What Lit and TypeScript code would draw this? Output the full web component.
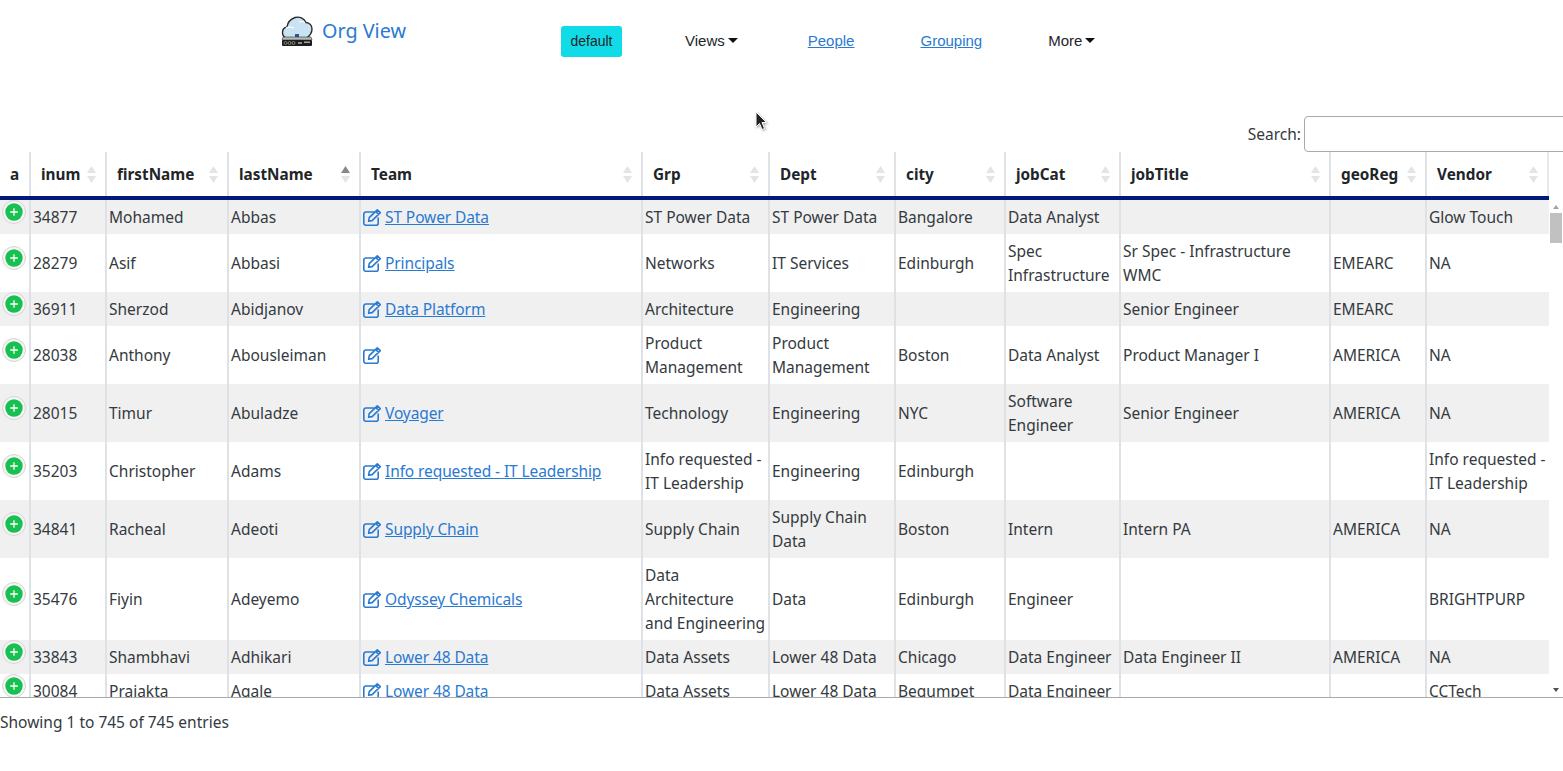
import { LitElement, html, css, svg } from 'lit';
import { customElement } from 'lit/decorators.js';

const widths = [29, 76, 122, 132, 282, 127, 126, 110, 115, 210, 96, 124];
const headers = ['a', 'inum', 'firstName', 'lastName', 'Team', 'Grp', 'Dept', 'city', 'jobCat', 'jobTitle', 'geoReg', 'Vendor'];

const rows = [
    ['34877', 'Mohamed', 'Abbas', 'ST Power Data', 'ST Power Data', 'ST Power Data', 'Bangalore', 'Data Analyst', '', '', 'Glow Touch'],
    ['28279', 'Asif', 'Abbasi', 'Principals', 'Networks', 'IT Services', 'Edinburgh', 'Spec Infrastructure', 'Sr Spec - Infrastructure WMC', 'EMEARC', 'NA'],
    ['36911', 'Sherzod', 'Abidjanov', 'Data Platform', 'Architecture', 'Engineering', '', '', 'Senior Engineer', 'EMEARC', ''],
    ['28038', 'Anthony', 'Abousleiman', '', 'Product Management', 'Product Management', 'Boston', 'Data Analyst', 'Product Manager I', 'AMERICA', 'NA'],
    ['28015', 'Timur', 'Abuladze', 'Voyager', 'Technology', 'Engineering', 'NYC', 'Software Engineer', 'Senior Engineer', 'AMERICA', 'NA'],
    ['35203', 'Christopher', 'Adams', 'Info requested - IT Leadership', 'Info requested -\nIT Leadership', 'Engineering', 'Edinburgh', '', '', '', 'Info requested -\nIT Leadership'],
    ['34841', 'Racheal', 'Adeoti', 'Supply Chain', 'Supply Chain', 'Supply Chain Data', 'Boston', 'Intern', 'Intern PA', 'AMERICA', 'NA'],
    ['35476', 'Fiyin', 'Adeyemo', 'Odyssey Chemicals', 'Data\nArchitecture\nand Engineering', 'Data', 'Edinburgh', 'Engineer', '', '', 'BRIGHTPURP'],
    ['33843', 'Shambhavi', 'Adhikari', 'Lower 48 Data', 'Data Assets', 'Lower 48 Data', 'Chicago', 'Data Engineer', 'Data Engineer II', 'AMERICA', 'NA'],
    ['30084', 'Prajakta', 'Agale', 'Lower 48 Data', 'Data Assets', 'Lower 48 Data', 'Begumpet', 'Data Engineer', '', '', 'CCTech'],
];

const editIcon = svg`<path fill="none" stroke="currentColor" stroke-width="1.6" stroke-linejoin="round" d="M11.500 3H2.800A2 2 0 0 0 .8 5v9.200a2 2 0 0 0 2 2h10.400a2 2 0 0 0 2-2V8.500"/><path fill="none" stroke="currentColor" stroke-width="1.6" stroke-linejoin="round" d="M6.200 8.600 14.300 .9l3 2.800-8.200 7.900-3.500.7zM12.600 2.500l3 2.900"/>`;

@customElement('app-root')
export class AppRoot extends LitElement {
    static styles = css`
        :host {
            display: block;
            position: relative;
            height: 771px;
            overflow: hidden;
            background: #fff;
            color: #212529;
            font-family: 'Noto Sans', sans-serif;
            font-size: 15.5px;
            line-height: 24px;
        }

        .topbar {
            display: flex;
            height: 116px;
            font-family: 'Liberation Sans', sans-serif;
            font-size: 15px;
        }

        .brand {
            display: flex;
            align-items: flex-start;
            gap: 9px;
            margin-left: 281px;
            padding-top: 15px;
            width: 280px;
            color: #2a7ad2;
            font-family: 'Noto Sans', sans-serif;
            font-size: 19.800px;
            line-height: 32px;
            box-sizing: border-box;
        }

        .brand svg {
            display: block;
        }

        .nav {
            display: flex;
            align-items: flex-start;
            padding-top: 26px;
            line-height: 30px;
        }

        .badge {
            width: 61px;
            height: 31px;
            border-radius: 3px;
            background: #11dbe6;
            font-size: 14px;
            line-height: 30px;
            text-align: center;
            margin-right: 63px;
        }

        .menu {
            color: #212529;
            margin-right: 70px;
        }

        .menu::after {
            content: '';
            display: inline-block;
            margin-left: 3px;
            vertical-align: 3px;
            border-top: 5px solid #111;
            border-left: 5px solid transparent;
            border-right: 5px solid transparent;
        }

        .navlink {
            color: #2a7ad2;
            text-decoration: underline;
            margin-right: 66px;
        }

        .searchbar {
            display: flex;
            justify-content: flex-end;
            align-items: flex-start;
            height: 36px;
            gap: 3px;
            line-height: 36px;
            color: #343a40;
        }

        .search-box {
            width: 270px;
            height: 36px;
            flex: none;
            margin-right: -11px;
            border: 1px solid #aaa;
            border-radius: 4px;
            box-sizing: border-box;
        }

        table {
            table-layout: fixed;
            border-collapse: separate;
            border-spacing: 0;
            width: 1549px;
        }

        th {
            position: relative;
            height: 44px;
            padding: 0 0 0 10px;
            box-sizing: border-box;
            border-left: 2px solid #dee2e6;
            font-weight: 700;
            font-size: 15.300px;
            text-align: left;
            white-space: nowrap;
        }

        th:first-child {
            border-left: none;
            padding-left: 10px;
        }

        th:last-child {
            border-right: 2px solid #e6e9ec;
        }

        .head {
            border-bottom: 4px solid #001a7a;
            width: 1549px;
        }

        .sort {
            position: absolute;
            right: 9px;
            top: 14px;
            width: 9px;
            height: 17px;
        }

        .body-wrap {
            display: flex;
            height: 497px;
            border-bottom: 1px solid #aaa;
        }

        .body-clip {
            width: 1549px;
            overflow: hidden;
            flex: none;
        }

        td {
            padding: 5px 0 5px 2px;
            border-left: 2px solid #dee2e6;
            box-sizing: border-box;
            vertical-align: middle;
            color: #343a40;
            white-space: pre-line;
        }

        td:first-child {
            border-left: none;
            padding: 0;
        }

        tr.odd td {
            background: #f0f0f0;
        }

        .plus {
            display: block;
            width: 24px;
            height: 24px;
            margin: -11px 0 0 2px;
        }

        .team {
            color: #2a7ad2;
        }

        .team a {
            color: inherit;
            text-decoration: underline;
            letter-spacing: -0.1px;
        }

        .team svg {
            width: 18px;
            height: 17px;
            vertical-align: -3px;
            margin-right: 4px;
        }

        .scrollbar {
            flex: 1;
            display: flex;
            flex-direction: column;
            align-items: center;
        }

        .arrow-up,
        .arrow-down {
            flex: none;
            width: 0;
            height: 0;
            border-left: 3.500px solid transparent;
            border-right: 3.500px solid transparent;
        }

        .arrow-up {
            margin-top: 5px;
            border-bottom: 4px solid #a3a3a3;
        }

        .arrow-down {
            margin-top: auto;
            margin-bottom: 5px;
            border-top: 4px solid #505050;
        }

        .thumb {
            flex: none;
            width: 12px;
            height: 30px;
            margin-top: 4px;
            background: #c1c1c1;
        }

        .info {
            padding-top: 12px;
            color: #343a40;
        }

        .cursor {
            position: absolute;
            left: 755px;
            top: 111px;
            width: 13px;
            height: 21px;
            filter: drop-shadow(1px 1px 1px rgba(0, 0, 0, 0.35));
        }
    `;

    _sort(col: string) {
        const active = col === 'lastName';
        return html`<svg class="sort" viewBox="0 0 9 17">
            <path d="M4.500 0 9 7H0z" fill=${active ? '#888' : '#e2e4e6'} />
            <path d="M4.500 17 9 10H0z" fill="#e2e4e6" />
        </svg>`;
    }

    _logo() {
        return html`<svg width="32" height="32" viewBox="0 0 32 32">
            <path d="M6 23C3 22.500 1.500 20 1.500 17.500c0-3 2-5 4.500-5.500C6.500 7.500 10 4 14 2.500c4.500-1.300 9 .7 11 5 3.500.3 6 3 6 6.500 0 4-2.500 7-5.500 9z" fill="#c9e3f2" stroke="#2a2a2a" stroke-width="1.400" />
            <path d="M5 13c3-1.500 5-1 8 0M18 7c2-1 4-.5 6 .5" fill="none" stroke="#fff" stroke-width="1.200" />
            <rect x="14" y="19" width="4" height="5" fill="#2b5a86" />
            <path d="M2 22h28l1 3H1z" fill="#b4babd" stroke="#333" stroke-width=".6" />
            <rect x="1" y="25" width="30" height="6" rx="1" fill="#1d1d1d" />
            <circle cx="4.500" cy="28" r="1.500" fill="none" stroke="#9a9a88" stroke-width=".8" />
            <circle cx="8.500" cy="28" r="1.500" fill="none" stroke="#9a9a88" stroke-width=".8" />
            <circle cx="12.500" cy="28" r="1.500" fill="none" stroke="#9a9a88" stroke-width=".8" />
            <rect x="17" y="27" width="4" height="2" fill="#8a8a8a" />
            <rect x="23" y="26.500" width="6" height="1.500" fill="#a4a4a4" />
        </svg>`;
    }

    _plus() {
        return html`<svg class="plus" viewBox="0 0 24 24">
            <circle cx="12" cy="12" r="11.500" fill="#f6f6f6" stroke="#d4d4d4" />
            <circle cx="12" cy="12" r="8.700" fill="#17c050" />
            <path d="M12 8.200v7.600M8.200 12h7.600" stroke="#fff" stroke-width="1.300" />
        </svg>`;
    }

    _colgroup() {
        return html`<colgroup>${widths.map((w) => html`<col style="width:${w}px" />`)}</colgroup>`;
    }

    render() {
        return html`
            <div class="topbar">
                <div class="brand">${this._logo()}<span>Org View</span></div>
                <div class="nav">
                    <span class="badge">default</span>
                    <span class="menu">Views</span>
                    <a class="navlink">People</a>
                    <a class="navlink">Grouping</a>
                    <span class="menu">More</span>
                </div>
            </div>
            <div class="searchbar">
                <span>Search:</span>
                <div class="search-box"></div>
            </div>
            <table class="head">
                ${this._colgroup()}
                <tr>
                    ${headers.map((h, i) => html`<th>${h}${i > 0 ? this._sort(h) : ''}</th>`)}
                </tr>
            </table>
            <div class="body-wrap">
                <div class="body-clip">
                    <table>
                        ${this._colgroup()}
                        ${rows.map(
                            (r, i) => html`<tr class=${i % 2 === 0 ? 'odd' : ''}><td>${this._plus()}</td>${r.map((c, j) =>
                                j === 3
                                    ? html`<td class="team"><svg viewBox="0 0 18 17">${editIcon}</svg>${c ? html`<a>${c}</a>` : ''}</td>`
                                    : html`<td>${c}</td>`
                            )}</tr>`
                        )}
                    </table>
                </div>
                <div class="scrollbar">
                    <div class="arrow-up"></div>
                    <div class="thumb"></div>
                    <div class="arrow-down"></div>
                </div>
            </div>
            <div class="info">Showing 1 to 745 of 745 entries</div>
            <svg class="cursor" viewBox="0 0 13 21">
                <path d="M1 1v15l3.500-3.500 2.500 6 2.500-1-2.500-6H11.500z" fill="#222" stroke="#fff" stroke-width="1" />
            </svg>
        `;
    }
}
